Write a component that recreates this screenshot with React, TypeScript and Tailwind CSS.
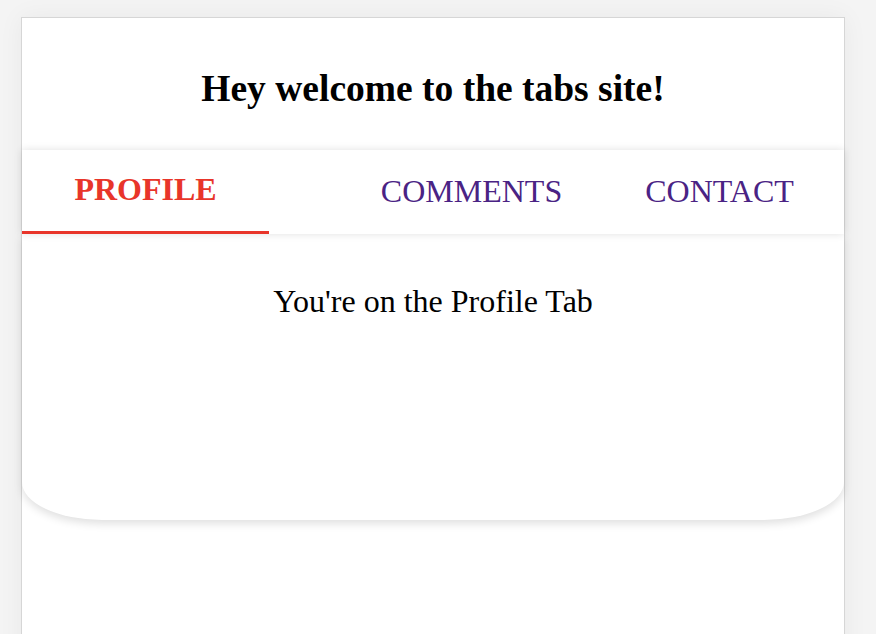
const tabs = [
  { label: 'PROFILE', active: true, className: 'w-[247px] pt-[21px]' },
  { label: 'COMMENTS', active: false, className: 'w-[247px] ml-[79px] pt-[23px]' },
  { label: 'CONTACT', active: false, className: 'flex-1 pt-[23px]' },
]

export default function App() {
  return (
    <div className="min-h-screen h-[634px] overflow-hidden bg-[#f4f4f4] font-['Liberation_Serif',serif] text-black">
      <div className="ml-[21px] mt-[17px] w-[824px] min-h-[700px] border border-[#d6d6d6] bg-white shadow-[0_0_24px_rgba(0,0,0,0.05)]">
        {/* Header */}
        <div className="h-[132px] pt-[50px] text-center">
          <h1 className="text-[37.5px] leading-[42px] font-bold">Hey welcome to the tabs site!</h1>
        </div>

        {/* Tab bar */}
        <div className="relative z-10 flex h-[84px] bg-white shadow-[0_0_8px_rgba(0,0,0,0.12)]">
          {tabs.map((tab) => (
            <div
              key={tab.label}
              className={`${tab.className} h-full cursor-pointer text-center text-[32px] leading-[37px] border-b-[3px] ${
                tab.active
                  ? 'border-[#e8352a] font-bold text-[#e8352a]'
                  : 'border-transparent text-[#4a2384]'
              }`}
            >
              {tab.label}
            </div>
          ))}
        </div>

        {/* Tab content */}
        <div className="h-[286px] rounded-b-[80px_38px] bg-white pt-[49px] text-center shadow-[0_4px_8px_rgba(0,0,0,0.12)]">
          <p className="text-[32px] leading-[37px]">You're on the Profile Tab</p>
        </div>
      </div>
    </div>
  )
}
